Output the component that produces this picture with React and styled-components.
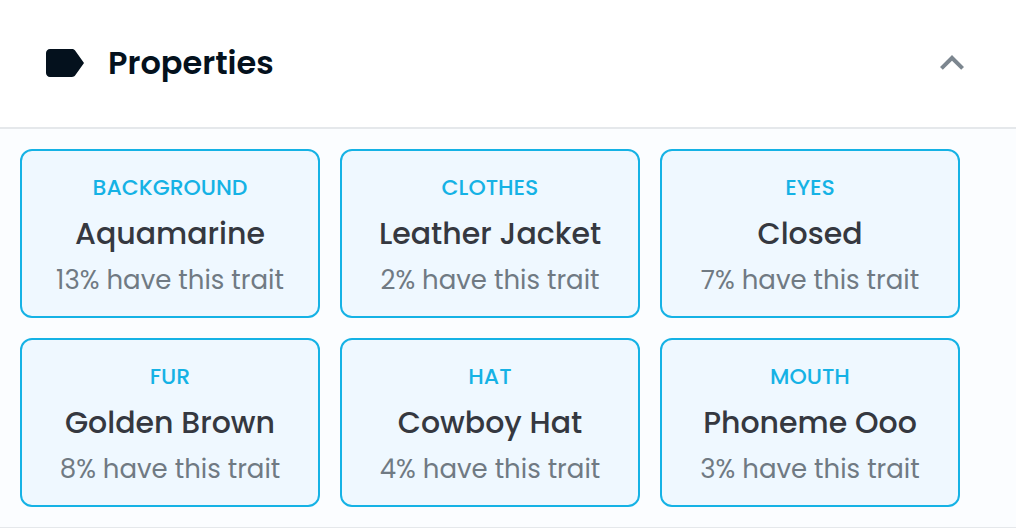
import React, { useState } from "react";
import styled, { createGlobalStyle } from "styled-components";
import { MdLabel, MdKeyboardArrowUp, MdKeyboardArrowDown } from "react-icons/md";

const GlobalStyle = createGlobalStyle`
  * {
    box-sizing: border-box;
  }
  body {
    margin: 0;
    background: #ffffff;
    color: #04111d;
    font-family: Poppins, Inter, "Liberation Sans", sans-serif;
  }
`;

const Section = styled.section`
  border-bottom: 1px solid #e5e8eb;
`;

const Heading = styled.h2`
  margin: 0;
  border-bottom: 2px solid #e5e8eb;
`;

const Toggle = styled.button`
  display: flex;
  align-items: center;
  gap: 20px;
  width: 100%;
  padding: 39px 40px 40px;
  border: 0;
  background: #ffffff;
  color: #04111d;
  font: inherit;
  font-size: 32px;
  font-weight: 600;
  line-height: 48px;
  text-align: left;
  cursor: pointer;

  svg {
    flex: none;
    width: 48px;
    height: 48px;
  }
`;

const Title = styled.span`
  flex: 1;
`;

const Chevron = styled.span`
  display: flex;
  color: #7c868f;
`;

const Traits = styled.div`
  display: grid;
  grid-template-columns: repeat(auto-fill, 300px);
  gap: 20px;
  padding: 20px;
  background: #fbfdff;
`;

const Card = styled.a`
  display: flex;
  flex-direction: column;
  padding: 14px 12px 13px;
  border: 2px solid #15b2e5;
  border-radius: 12px;
  background: #eff8ff;
  line-height: 46px;
  text-align: center;
  text-decoration: none;
  white-space: nowrap;
`;

const Kind = styled.span`
  color: #15b2e5;
  font-size: 22px;
  font-weight: 500;
  text-transform: uppercase;
`;

const Value = styled.span`
  color: #353840;
  font-size: 30px;
  font-weight: 500;
`;

const Rarity = styled.span`
  color: #707a83;
  font-size: 26px;
`;

const traits = [
  { kind: "Background", value: "Aquamarine", share: 13 },
  { kind: "Clothes", value: "Leather Jacket", share: 2 },
  { kind: "Eyes", value: "Closed", share: 7 },
  { kind: "Fur", value: "Golden Brown", share: 8 },
  { kind: "Hat", value: "Cowboy Hat", share: 4 },
  { kind: "Mouth", value: "Phoneme Ooo", share: 3 },
];

export default function App() {
  const [open, setOpen] = useState(true);
  return (
    <>
      <GlobalStyle />
      <Section>
        <Heading>
          <Toggle type="button" aria-expanded={open} onClick={() => setOpen(!open)}>
            <MdLabel aria-hidden="true" />
            <Title>Properties</Title>
            <Chevron>
              {open ? <MdKeyboardArrowUp aria-hidden="true" /> : <MdKeyboardArrowDown aria-hidden="true" />}
            </Chevron>
          </Toggle>
        </Heading>
        {open && (
          <Traits>
            {traits.map(({ kind, value, share }) => (
              <Card key={kind} href={`#${kind.toLowerCase()}`}>
                <Kind>{kind}</Kind>
                <Value>{value}</Value>
                <Rarity>{share}% have this trait</Rarity>
              </Card>
            ))}
          </Traits>
        )}
      </Section>
    </>
  );
}
